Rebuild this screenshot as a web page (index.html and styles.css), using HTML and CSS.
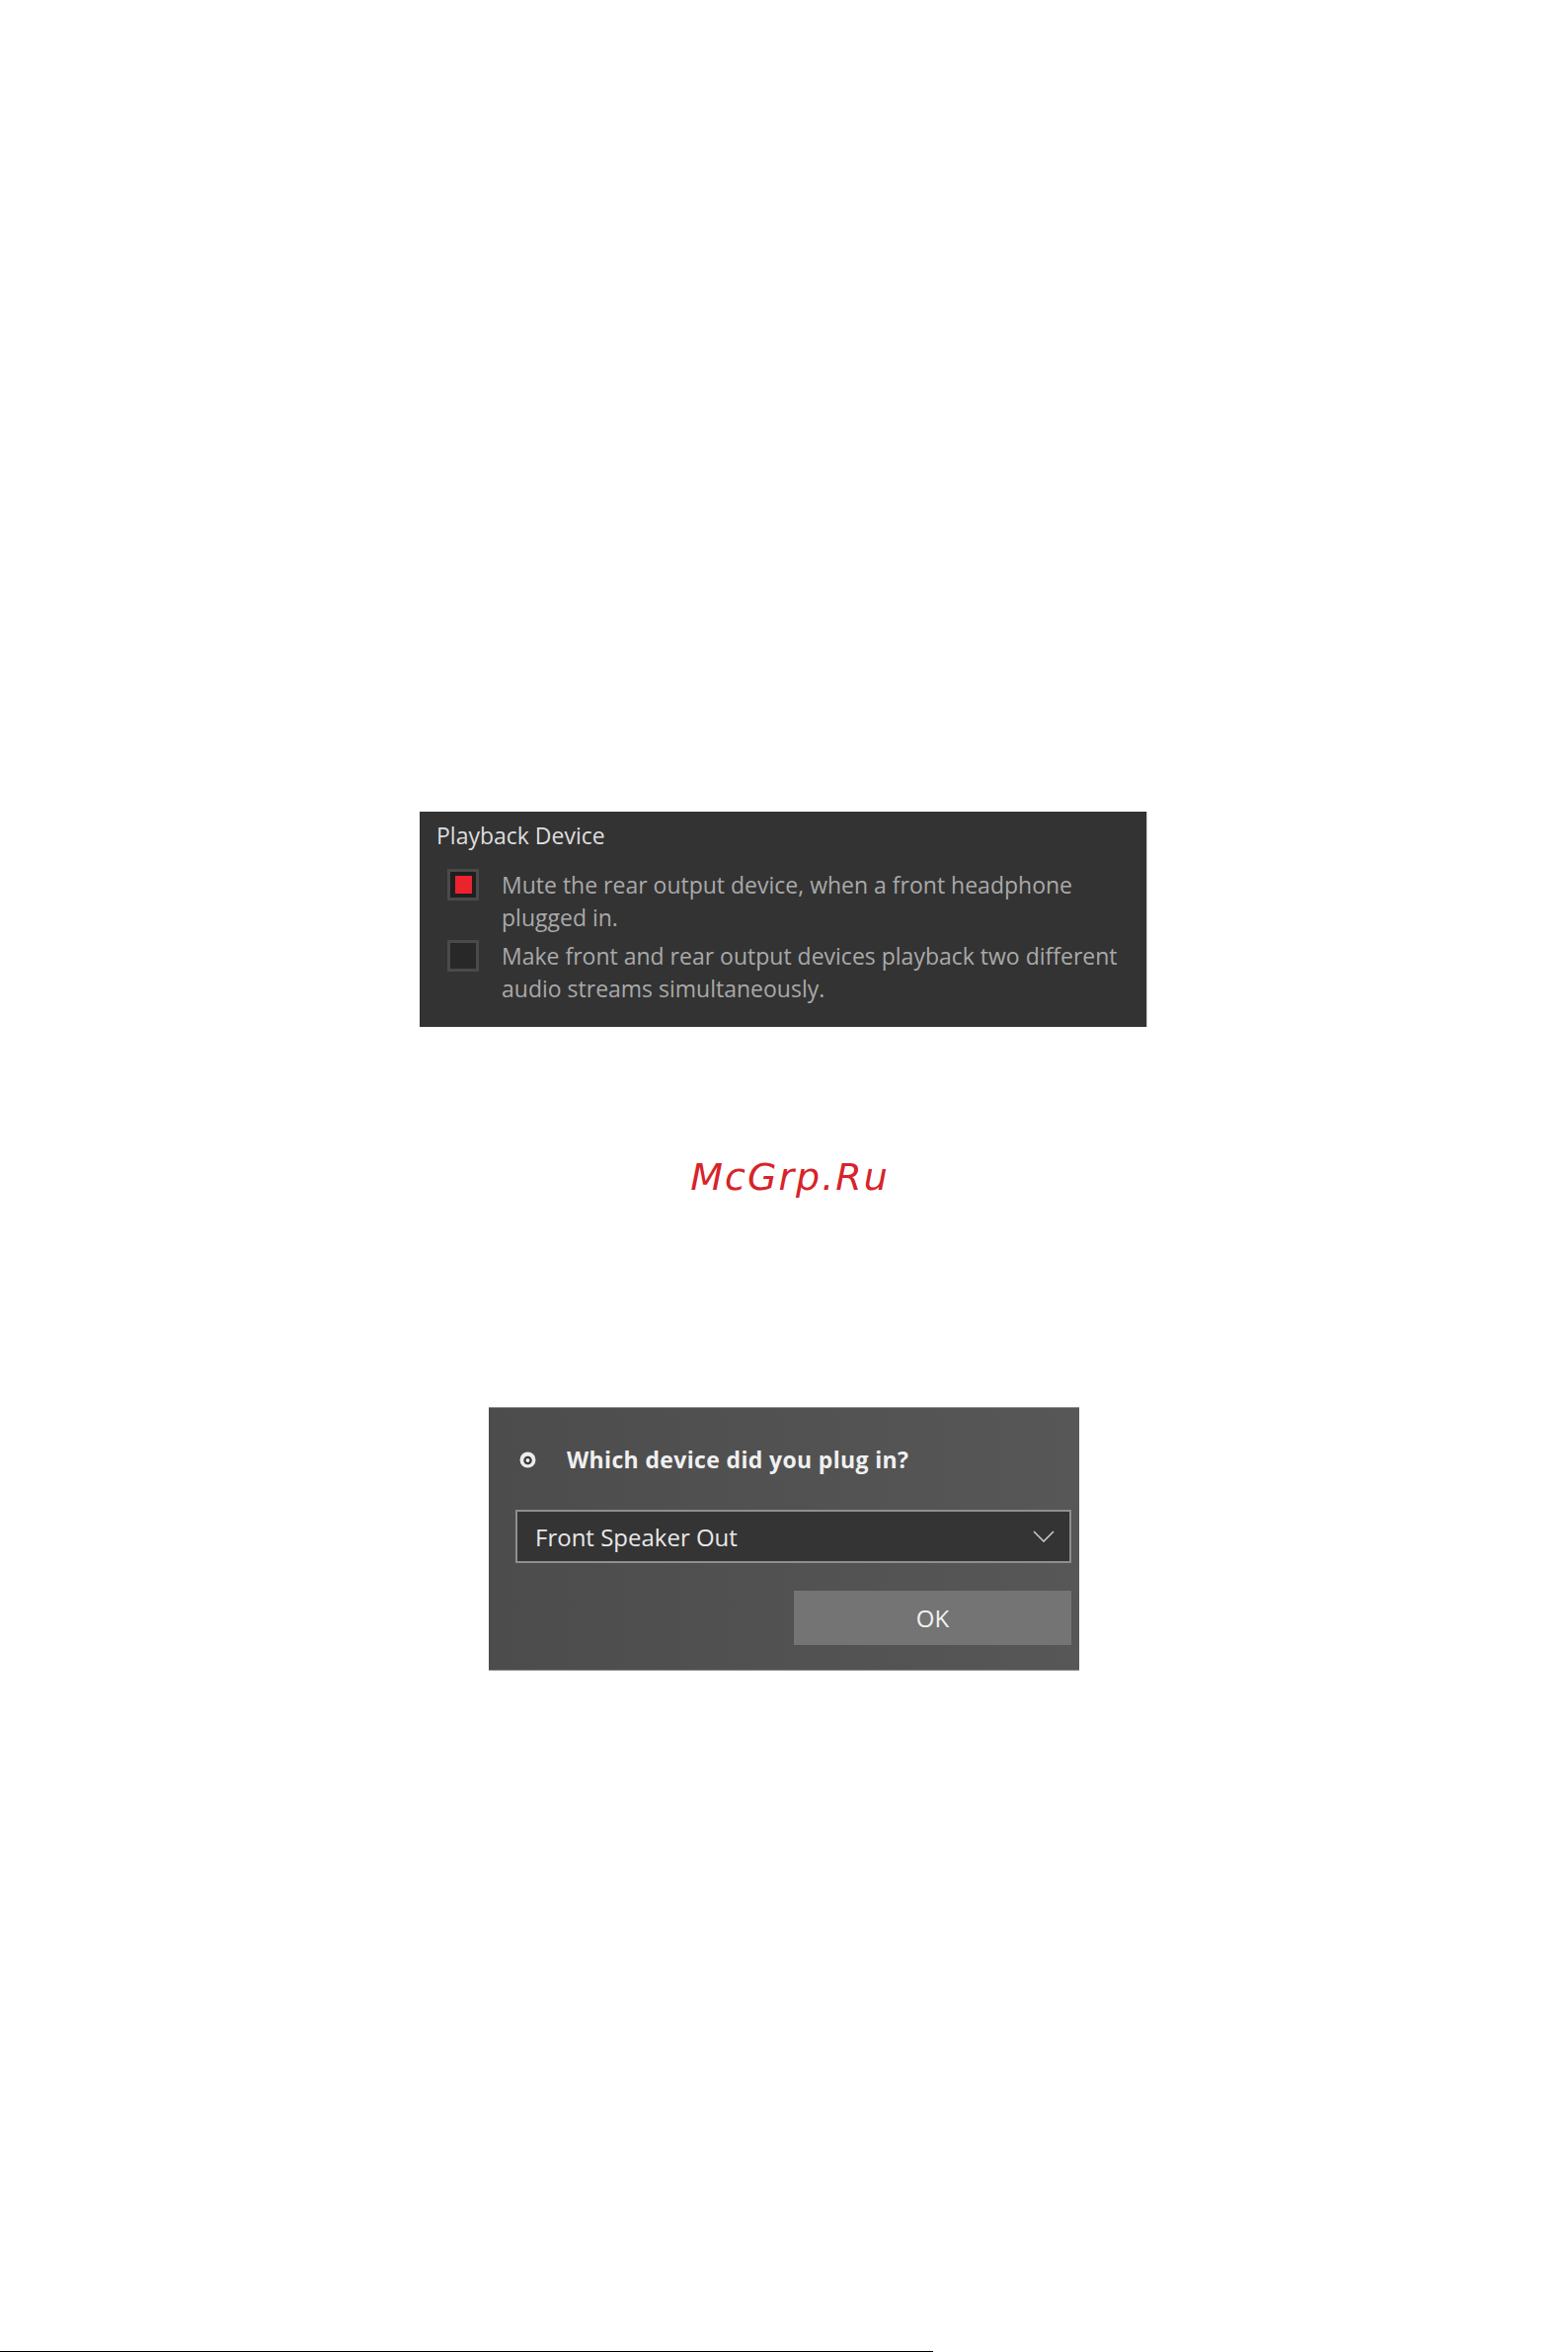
FILE: index.html
```html
<!DOCTYPE html>
<html lang="en">

<head>
  <meta charset="UTF-8">
  <title>Playback Device</title>
  <link rel="stylesheet" href="styles.css">
</head>

<body>
  <div class="page">
    <section class="playback">
      <h2 class="playback-title">Playback Device</h2>
      <div class="option">
        <span class="check checked"></span>
        <span class="option-text">Mute the rear output device, when a front headphone plugged in.</span>
      </div>
      <div class="option">
        <span class="check"></span>
        <span class="option-text">Make front and rear output devices playback two different audio streams simultaneously.</span>
      </div>
    </section>

    <p class="watermark">McGrp.Ru</p>

    <section class="jack-dialog">
      <div class="jack-question">
        <svg class="jack-icon" width="17" height="17" viewBox="0 0 16 16">
          <circle cx="8" cy="8" r="7.5" fill="#ececec"/>
          <circle cx="8" cy="8.5" r="4" fill="#3a3a3a"/>
          <circle cx="8" cy="8.5" r="1.8" fill="#f0f0f0"/>
        </svg>
        <span>Which device did you plug in?</span>
      </div>
      <div class="jack-select">
        <span>Front Speaker Out</span>
        <svg class="chevron" width="22" height="12" viewBox="0 0 22 12">
          <polyline points="1,1 11,11 21,1" fill="none" stroke="#c8c8c8" stroke-width="1.6"/>
        </svg>
      </div>
      <div class="jack-actions">
        <button type="button" class="ok-button">OK</button>
      </div>
    </section>

    <div class="page-rule"></div>
  </div>
</body>

</html>
```

FILE: styles.css
```css
body {
  margin: 0;
  background: #fff;
  font-family: "Open Sans", "Noto Sans", Arial, sans-serif;
}

.page {
  width: 1588px;
  height: 2382px;
  box-sizing: border-box;
  padding-top: 822px;
  display: flex;
  flex-direction: column;
  align-items: center;
}

/* dark settings panel */
.playback {
  width: 737px;
  height: 218px;
  box-sizing: border-box;
  margin-right: 1px;
  background: #333333;
  border-right: 1px solid #c3ccd4;
  padding: 8px 8px 0 17px;
}

.playback-title {
  margin: 0;
  font-size: 23px;
  font-weight: 400;
  line-height: 33px;
  color: #dedede;
}

.option {
  display: flex;
  align-items: flex-start;
  gap: 23px;
  margin-top: 6px;
  padding-left: 11px;
}

.playback-title + .option {
  margin-top: 17px;
}

.check {
  flex: none;
  width: 32px;
  height: 32px;
  box-sizing: border-box;
  border: 3px solid #4a4a4a;
  background: #282828;
  display: flex;
  align-items: center;
  justify-content: center;
}

.check.checked {
  background: #1f1f1f;
}

.check.checked::after {
  content: "";
  width: 17px;
  height: 18px;
  background: #ec232d;
}

.option-text {
  font-size: 23px;
  line-height: 33px;
  color: #a9a9a9;
}

.watermark {
  margin: 129px 0 0 12px;
  font-family: "DejaVu Sans", sans-serif;
  font-style: italic;
  font-size: 38px;
  line-height: 46px;
  letter-spacing: 2px;
  color: #d7232a;
}

/* jack detection dialog */
.jack-dialog {
  width: 598px;
  height: 267px;
  box-sizing: border-box;
  margin-top: 210px;
  padding: 36px 8px 0 27px;
  background: linear-gradient(to right, #4c4c4c, #575757);
  border-top: 1px solid #8a8a8a;
  border-bottom: 1px solid #8a8a8a;
}

.jack-question {
  display: flex;
  align-items: center;
  gap: 31px;
  padding-left: 4px;
  font-size: 23px;
  font-weight: 700;
  line-height: 33px;
  letter-spacing: 0.35px;
  color: #f0f0f0;
}

.jack-select {
  margin-top: 34px;
  height: 54px;
  box-sizing: border-box;
  border: 2px solid #8e8e8e;
  background: #343434;
  display: flex;
  align-items: center;
  justify-content: space-between;
  padding: 0 15px 0 18px;
  font-size: 24px;
  color: #e8e8e8;
}

.jack-actions {
  display: flex;
  justify-content: flex-end;
  margin-top: 28px;
}

.ok-button {
  width: 281px;
  height: 55px;
  border: none;
  background: #747474;
  color: #f2f2f2;
  font-family: inherit;
  font-size: 24px;
  cursor: pointer;
}

.page-rule {
  margin-top: auto;
  align-self: flex-start;
  width: 945px;
  height: 1px;
  background: #000;
}
```
